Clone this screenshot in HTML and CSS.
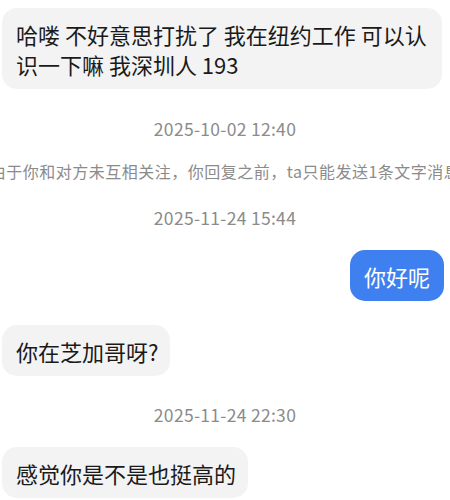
FILE: index.html
```html
<!DOCTYPE html>
<html lang="zh-CN">
<head>
    <meta charset="UTF-8">
    <meta name="viewport" content="width=device-width, initial-scale=1.0">
    <title>私信</title>
    <link rel="stylesheet" href="styles.css">
</head>
<body>
    <div class="chat">
        <div class="row row-left first">
            <div class="bubble">哈喽 不好意思打扰了 我在纽约工作 可以认识一下嘛 我深圳人 193</div>
        </div>
        <div class="time time-1">2025-10-02 12:40</div>
        <div class="notice"><span>由于你和对方未互相关注，你回复之前，ta只能发送1条文字消息</span></div>
        <div class="time time-2">2025-11-24 15:44</div>
        <div class="row row-right mine">
            <div class="bubble bubble-blue">你好呢</div>
        </div>
        <div class="row row-left second">
            <div class="bubble">你在芝加哥呀?</div>
        </div>
        <div class="time time-3">2025-11-24 22:30</div>
        <div class="row row-left third">
            <div class="bubble">感觉你是不是也挺高的</div>
        </div>
    </div>
</body>
</html>
```

FILE: styles.css
```css
body {
    margin: 0;
    padding: 0;
    background-color: #fff;
    font-family: "Noto Sans CJK SC", "Noto Sans", sans-serif;
    color: #1a1a1a;
    overflow: hidden;
}
.chat {
    display: flex;
    flex-direction: column;
    padding-top: 8px;
}
.row {
    display: flex;
}
.row-left {
    justify-content: flex-start;
    padding-left: 2px;
}
.row-right {
    justify-content: flex-end;
    padding-right: 6px;
}
.bubble {
    max-width: 414px;
    background-color: #f3f3f3;
    border-radius: 15px;
    padding: 10.5px 12px 10.5px 14px;
    font-size: 22px;
    line-height: 30px;
}
.bubble-blue {
    background-color: #3f80f0;
    color: #fff;
    padding: 10.5px 14px;
}
.time {
    text-align: center;
    font-size: 17.5px;
    letter-spacing: 0.3px;
    line-height: 24px;
    color: #8b8b8b;
}
.time-1 {
    margin-top: 28px;
}
.time-2 {
    margin-top: 23px;
}
.time-3 {
    margin-top: 27px;
}
.notice {
    display: flex;
    justify-content: center;
    overflow: hidden;
    margin-top: 18px;
    font-size: 16px;
    letter-spacing: 0.5px;
    line-height: 24px;
    color: #8b8b8b;
}
.notice span {
    white-space: nowrap;
    flex-shrink: 0;
}
.mine {
    margin-top: 20px;
}
.second {
    margin-top: 24px;
}
.third {
    margin-top: 20px;
}
```
